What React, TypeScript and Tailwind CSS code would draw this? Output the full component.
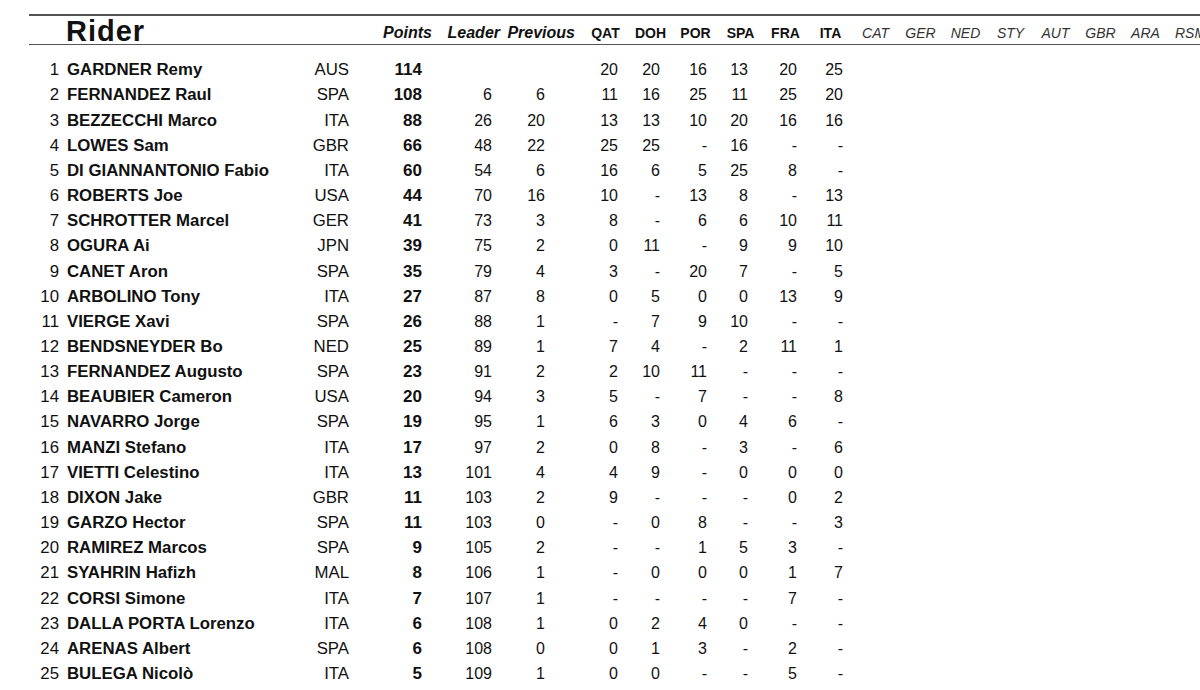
import React from 'react';

type Row = [number, string, string, number, string, string, string[]];

const rows: Row[] = [
  [1, 'GARDNER Remy', 'AUS', 114, '', '', ['20', '20', '16', '13', '20', '25']],
  [2, 'FERNANDEZ Raul', 'SPA', 108, '6', '6', ['11', '16', '25', '11', '25', '20']],
  [3, 'BEZZECCHI Marco', 'ITA', 88, '26', '20', ['13', '13', '10', '20', '16', '16']],
  [4, 'LOWES Sam', 'GBR', 66, '48', '22', ['25', '25', '-', '16', '-', '-']],
  [5, 'DI GIANNANTONIO Fabio', 'ITA', 60, '54', '6', ['16', '6', '5', '25', '8', '-']],
  [6, 'ROBERTS Joe', 'USA', 44, '70', '16', ['10', '-', '13', '8', '-', '13']],
  [7, 'SCHROTTER Marcel', 'GER', 41, '73', '3', ['8', '-', '6', '6', '10', '11']],
  [8, 'OGURA Ai', 'JPN', 39, '75', '2', ['0', '11', '-', '9', '9', '10']],
  [9, 'CANET Aron', 'SPA', 35, '79', '4', ['3', '-', '20', '7', '-', '5']],
  [10, 'ARBOLINO Tony', 'ITA', 27, '87', '8', ['0', '5', '0', '0', '13', '9']],
  [11, 'VIERGE Xavi', 'SPA', 26, '88', '1', ['-', '7', '9', '10', '-', '-']],
  [12, 'BENDSNEYDER Bo', 'NED', 25, '89', '1', ['7', '4', '-', '2', '11', '1']],
  [13, 'FERNANDEZ Augusto', 'SPA', 23, '91', '2', ['2', '10', '11', '-', '-', '-']],
  [14, 'BEAUBIER Cameron', 'USA', 20, '94', '3', ['5', '-', '7', '-', '-', '8']],
  [15, 'NAVARRO Jorge', 'SPA', 19, '95', '1', ['6', '3', '0', '4', '6', '-']],
  [16, 'MANZI Stefano', 'ITA', 17, '97', '2', ['0', '8', '-', '3', '-', '6']],
  [17, 'VIETTI Celestino', 'ITA', 13, '101', '4', ['4', '9', '-', '0', '0', '0']],
  [18, 'DIXON Jake', 'GBR', 11, '103', '2', ['9', '-', '-', '-', '0', '2']],
  [19, 'GARZO Hector', 'SPA', 11, '103', '0', ['-', '0', '8', '-', '-', '3']],
  [20, 'RAMIREZ Marcos', 'SPA', 9, '105', '2', ['-', '-', '1', '5', '3', '-']],
  [21, 'SYAHRIN Hafizh', 'MAL', 8, '106', '1', ['-', '0', '0', '0', '1', '7']],
  [22, 'CORSI Simone', 'ITA', 7, '107', '1', ['-', '-', '-', '-', '7', '-']],
  [23, 'DALLA PORTA Lorenzo', 'ITA', 6, '108', '1', ['0', '2', '4', '0', '-', '-']],
  [24, 'ARENAS Albert', 'SPA', 6, '108', '0', ['0', '1', '3', '-', '2', '-']],
  [25, 'BULEGA Nicolò', 'ITA', 5, '109', '1', ['0', '0', '-', '-', '5', '-']],
];

// widths so each race column ends on the right edge seen in the sheet
const raceCols = ['w-[73px]', 'w-[42px]', 'w-[47px]', 'w-[41px]', 'w-[49px]', 'w-[46px]'];

const doneRaces = ['QAT', 'DOH', 'POR', 'SPA', 'FRA', 'ITA'];
const nextRaces = ['CAT', 'GER', 'NED', 'STY', 'AUT', 'GBR', 'ARA', 'RSM'];

const Header = () => (
  <div>
    <div className="ml-[29px] h-[1.5px] bg-[#555]" />
    <div className="flex h-[28px] items-end">
      <div className="w-[360px] shrink-0 pl-[66px] text-[29px] leading-[26px] font-bold tracking-[1px] text-[#111]">
        Rider
      </div>
      <div className="w-[72px] shrink-0 pb-[3px] text-right text-[16px] leading-[16px] font-bold italic text-[#111]">
        Points
      </div>
      <div className="w-[68px] shrink-0 pb-[3px] text-right text-[16px] leading-[16px] font-bold italic text-[#111]">
        Leader
      </div>
      <div className="w-[75px] shrink-0 pb-[3px] text-right text-[16px] leading-[16px] font-bold italic text-[#111]">
        Previous
      </div>
      <div className="ml-[8px] flex shrink-0">
        {doneRaces.map((r) => (
          <div
            key={r}
            className="w-[45px] shrink-0 pb-[4px] text-center text-[14px] leading-[14px] font-bold text-[#111]"
          >
            {r}
          </div>
        ))}
        {nextRaces.map((r) => (
          <div
            key={r}
            className="w-[45px] shrink-0 pb-[4px] text-center text-[14px] leading-[14px] italic text-[#333]"
          >
            {r}
          </div>
        ))}
      </div>
    </div>
    <div className="ml-[29px] h-[1.5px] bg-[#555]" />
  </div>
);

const RiderRow = ({ row }: { row: Row }) => {
  const [pos, name, nat, pts, leader, prev, races] = row;
  return (
    <div className="flex h-[25.17px] items-center leading-[25px] text-[#111]">
      <div className="w-[59px] shrink-0 text-right text-[16.8px]">{pos}</div>
      <div className="w-[241px] shrink-0 pl-[8px] text-[16.8px] font-bold whitespace-nowrap">{name}</div>
      <div className="w-[49px] shrink-0 text-right text-[16.8px]">{nat}</div>
      <div className="w-[73px] shrink-0 text-right text-[17px] font-bold">{pts}</div>
      <div className="w-[70px] shrink-0 text-right text-[16px]">{leader}</div>
      <div className="w-[53px] shrink-0 text-right text-[16px]">{prev}</div>
      {races.map((v, i) => (
        <div key={i} className={`${raceCols[i]} shrink-0 text-right text-[16px]`}>
          {v}
        </div>
      ))}
    </div>
  );
};

export default function App() {
  return (
    <div
      className="h-[690px] w-[1200px] overflow-hidden bg-white pt-[14px]"
      style={{ fontFamily: '"Liberation Sans", Arial, sans-serif' }}
    >
      <Header />
      <div className="mt-[12.2px]">
        {rows.map((r) => (
          <RiderRow key={r[0]} row={r} />
        ))}
      </div>
    </div>
  );
}
